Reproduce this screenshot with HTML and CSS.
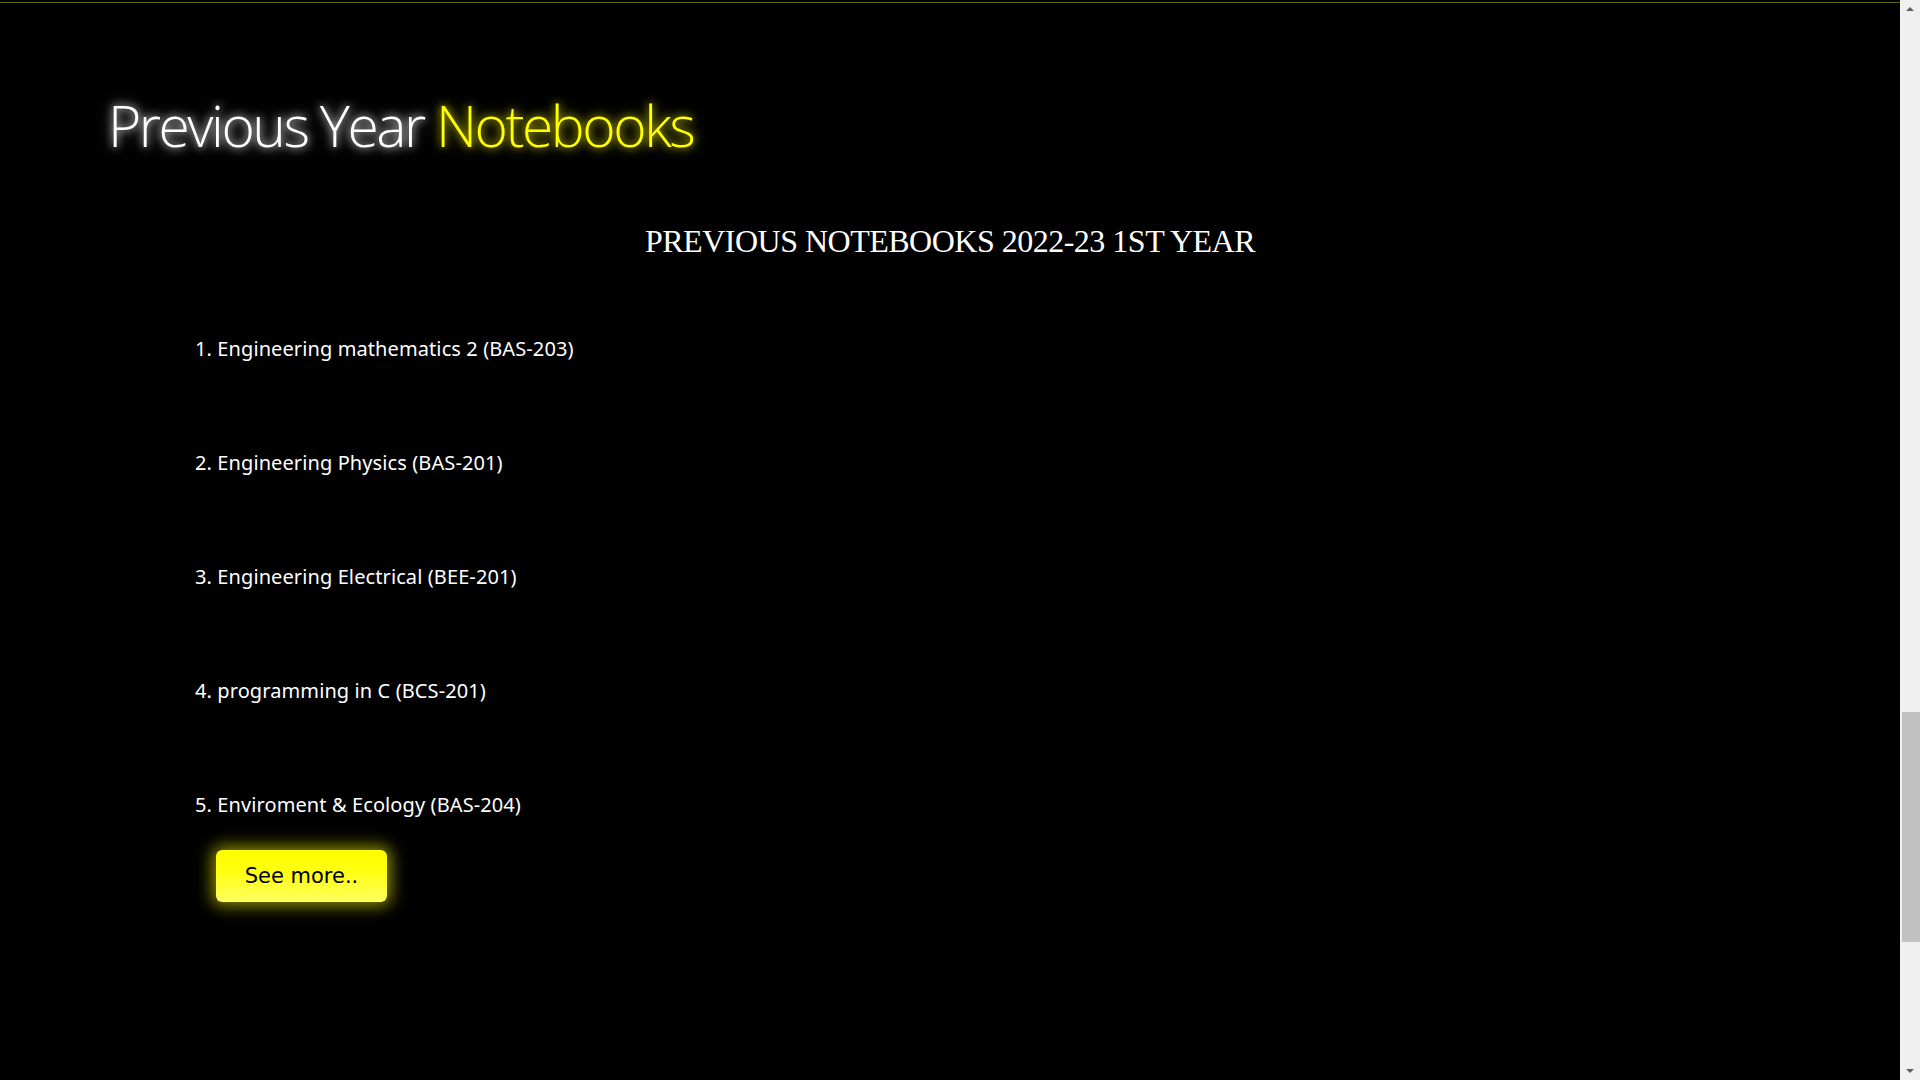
FILE: index.html
```html
<!DOCTYPE html>
<html lang="en">
<head>
<meta charset="utf-8">
<title>Previous Year Notebooks</title>
<link rel="stylesheet" href="styles.css">
</head>
<body>
<div class="window">
  <main class="page">
    <div class="edge"></div>
    <section class="notebooks">
      <h1 class="title">Previous Year <span class="accent">Notebooks</span></h1>
      <h2 class="subtitle">Previous Notebooks 2022-23 1st Year</h2>
      <ol class="list">
        <li>Engineering mathematics 2 (BAS-203)</li>
        <li>Engineering Physics (BAS-201)</li>
        <li>Engineering Electrical (BEE-201)</li>
        <li>programming in C (BCS-201)</li>
        <li>Enviroment &amp; Ecology (BAS-204)</li>
      </ol>
      <div class="more-row"><button class="more">See more..</button></div>
    </section>
  </main>
  <div class="scrollbar" aria-hidden="true">
    <div class="arrow up"></div>
    <div class="track">
      <div class="thumb" style="margin-top: 694px; height: 230px;"></div>
    </div>
    <div class="arrow down"></div>
  </div>
</div>
</body>
</html>
```
FILE: styles.css
```css
html, body {
  margin: 0;
  background: #000;
  color: #fff;
  overflow: hidden;
}
.window {
  display: flex;
  height: 1080px;
}
.page {
  flex: 1;
  min-width: 0;
}
.edge {
  height: 2px;
  border-bottom: 1px solid #666600;
}
.notebooks {
  padding: 0 0 0 108px;
}
.title {
  margin: 0;
  padding-top: 89px;
  font-family: "Open Sans", sans-serif;
  font-weight: 300;
  font-size: 57px;
  line-height: 67px;
  letter-spacing: -2.5px;
  color: #fff;
  text-shadow: 0 0 8px rgba(255,255,255,0.9), 0 0 16px rgba(255,255,255,0.5);
}
.accent {
  color: #ffff00;
  text-shadow: 0 0 8px rgba(255,255,0,0.8), 0 0 16px rgba(255,255,0,0.45);
}
.subtitle {
  margin: 0;
  margin-left: -108px;
  padding-top: 62px;
  text-align: center;
  font-family: "Liberation Serif", serif;
  font-weight: 400;
  font-size: 32px;
  line-height: 40px;
  text-transform: uppercase;
  letter-spacing: -0.5px;
}
.list {
  margin: 0;
  padding: 73px 0 0 87px;
  list-style-position: inside;
  font-family: "Noto Sans", sans-serif;
  font-size: 20px;
  letter-spacing: 0.1px;
}
.list li {
  height: 114px;
  line-height: 30px;
}
.list li:last-child {
  height: 30px;
}
.more-row {
  padding: 30px 0 0 108px;
}
.more {
  display: block;
  width: 171px;
  height: 52px;
  border: none;
  border-radius: 6px;
  background: linear-gradient(#ffff00 0%, #ffff10 40%, #ffff60 100%);
  box-shadow: 0 0 16px 4px rgba(255,255,0,0.55);
  font-family: "DejaVu Sans", sans-serif;
  font-size: 21px;
  color: #000;
  cursor: pointer;
}
.scrollbar {
  width: 20px;
  flex: none;
  background: #f0f0f0;
  display: flex;
  flex-direction: column;
}
.track {
  flex: 1;
  padding: 0 0 0 2px;
}
.thumb {
  background: #c1c1c1;
}
.arrow {
  height: 18px;
  flex: none;
  display: flex;
  align-items: center;
  justify-content: center;
}
.arrow::before {
  content: "";
  border-left: 4px solid transparent;
  border-right: 4px solid transparent;
}
.arrow.up::before {
  border-bottom: 4px solid #606060;
}
.arrow.down::before {
  border-top: 4px solid #606060;
}
```
